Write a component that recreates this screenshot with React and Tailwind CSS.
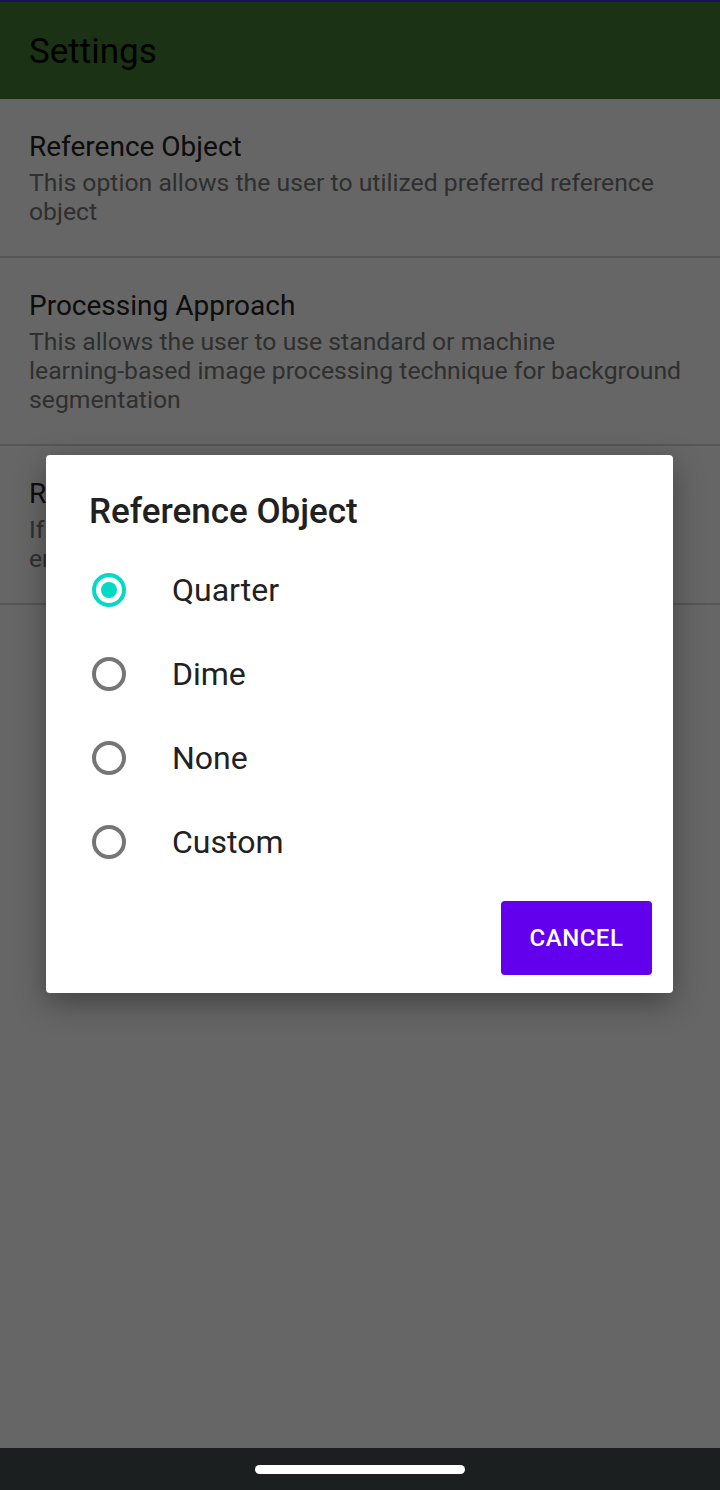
const items = [
  {
    title: "Reference Object",
    desc: "This option allows the user to utilized preferred reference object",
  },
  {
    title: "Processing Approach",
    desc: (
      <>
        This allows the user to use standard or machine{" "}
        <span className="whitespace-nowrap">learning-based</span> image processing technique for background
        segmentation
      </>
    ),
  },
  {
    title: "Reference Object Size",
    desc: "If custom reference object is selected,\nenter its width and height in inches",
  },
];

const options = ["Quarter", "Dime", "None", "Custom"];

const Radio = ({ checked }) =>
  checked ? (
    <span className="w-[34px] h-[34px] rounded-full border-[4px] border-[#03dac5] flex items-center justify-center">
      <span className="w-[16px] h-[16px] rounded-full bg-[#03dac5]"></span>
    </span>
  ) : (
    <span className="w-[34px] h-[34px] rounded-full border-[4px] border-[#757575]"></span>
  );

export default function App() {
  return (
    <div className="w-[720px] h-[1490px] flex flex-col bg-white font-['Roboto',sans-serif]">
      <div className="relative flex-1 flex flex-col">
        {/* status strip + toolbar */}
        <div className="h-[2px] bg-[#3f26e0]"></div>
        <div className="h-[97px] bg-[#448032] flex items-center px-[29px]">
          <h1 className="text-[35px] text-black leading-none pt-[1px]">Settings</h1>
        </div>

        {/* preference list */}
        <div>
          {items.map((it) => (
            <div key={it.title} className="px-[29px] pt-[29px] pb-[30px] border-b-2 border-[#d6d6d6]">
              <div className="text-[28px] leading-[38px] text-[#212121]">{it.title}</div>
              <div className="mt-[2px] text-[24.75px] leading-[29px] text-[#757575] whitespace-pre-line">{it.desc}</div>
            </div>
          ))}
        </div>

        {/* scrim */}
        <div className="absolute inset-0 bg-black/60"></div>

        {/* dialog */}
        <div className="absolute left-[46px] top-[455px] w-[627px] bg-white rounded-[4px] shadow-[0_10px_30px_rgba(0,0,0,0.35)]">
          <div className="pl-[43px] pr-[24px] pt-[37px]">
            <h2 className="text-[35px] leading-[40px] font-medium text-[#212121]">Reference Object</h2>
          </div>
          <div className="mt-[16px] flex flex-col">
            {options.map((o, i) => (
              <div key={o} className="h-[84px] flex items-center pl-[46px]">
                <Radio checked={i === 0} />
                <span className="ml-[46px] text-[32px] text-[#212121]">{o}</span>
              </div>
            ))}
          </div>
          <div className="flex justify-end px-[21px] pt-[17px] pb-[18px]">
            <button className="w-[151px] h-[74px] rounded-[4px] bg-[#6200ee] text-white text-[24px] font-medium tracking-[0.5px]">
              CANCEL
            </button>
          </div>
        </div>
      </div>

      {/* nav bar */}
      <div className="h-[42px] bg-[#1c1f20] flex items-center justify-center">
        <div className="w-[210px] h-[9px] rounded-full bg-white"></div>
      </div>
    </div>
  );
}
